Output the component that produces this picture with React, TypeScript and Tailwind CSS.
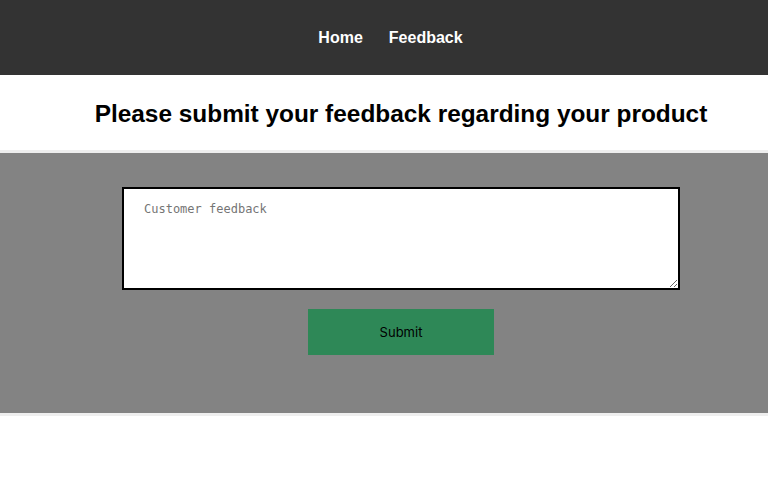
export default function App() {
  return (
    <div className="min-h-[483px] bg-white font-['Liberation_Sans',Arial,sans-serif]">
      <header className="h-[75px] bg-[#333333] flex items-center justify-center gap-[26px] pl-[13px]">
        <a href="#" className="text-white font-bold text-[16px]">Home</a>
        <a href="#" className="text-white font-bold text-[16px]">Feedback</a>
      </header>

      <div className="h-[75px] flex items-center justify-center pl-[34px] pt-[4px]">
        <h1 className="text-[24.4px] font-bold text-black">
          Please submit your feedback regarding your product
        </h1>
      </div>

      <section className="bg-[#838383] border-y-[3px] border-[#eeeeee] flex flex-col items-center pl-[34px] pt-[34px] pb-[58px]">
        <textarea
          placeholder="Customer feedback"
          className="w-[558px] h-[103px] bg-white border-2 border-black px-[20px] pt-[11px] pb-[12px] text-[12px] font-['DejaVu_Sans_Mono',monospace] placeholder:text-[#757575] outline-none"
        />
        <button className="mt-[19px] w-[186px] h-[46px] bg-[#2e8857] text-black text-[13px] font-['Inter',sans-serif] pt-[2px]">
          Submit
        </button>
      </section>
    </div>
  );
}
